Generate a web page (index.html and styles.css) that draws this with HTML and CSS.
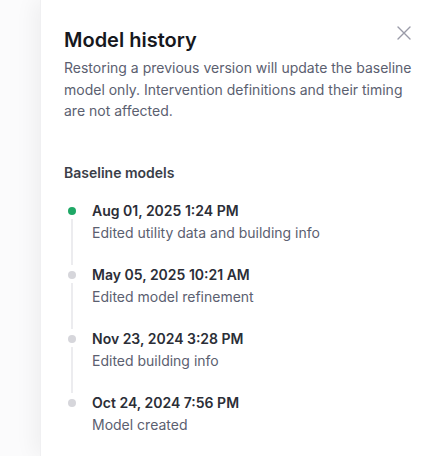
FILE: index.html
```html
<!DOCTYPE html>
<html lang="en">

<head>
    <meta charset="UTF-8">
    <meta name="viewport" content="width=device-width, initial-scale=1.0">
    <title>Model history</title>
    <link rel="stylesheet" href="styles.css">
</head>

<body>
    <aside class="panel">
        <button class="close-btn" aria-label="Close">
            <svg width="14" height="14" viewBox="0 0 14 14" fill="none">
                <path d="M1 1L13 13M13 1L1 13" stroke="currentColor" stroke-width="1.4" stroke-linecap="round" />
            </svg>
        </button>
        <h2>Model history</h2>
        <p class="intro">Restoring a previous version will update the baseline model only. Intervention definitions and their timing are not affected.</p>

        <h3 class="section-title">Baseline models</h3>
        <ul class="timeline">
            <li class="timeline-item current">
                <div class="marker"><span class="dot"></span><span class="line"></span></div>
                <div class="entry">
                    <div class="entry-date">Aug 01, 2025 1:24 PM</div>
                    <div class="entry-note">Edited utility data and building info</div>
                </div>
            </li>
            <li class="timeline-item">
                <div class="marker"><span class="dot"></span><span class="line"></span></div>
                <div class="entry">
                    <div class="entry-date">May 05, 2025 10:21 AM</div>
                    <div class="entry-note">Edited model refinement</div>
                </div>
            </li>
            <li class="timeline-item">
                <div class="marker"><span class="dot"></span><span class="line"></span></div>
                <div class="entry">
                    <div class="entry-date">Nov 23, 2024 3:28 PM</div>
                    <div class="entry-note">Edited building info</div>
                </div>
            </li>
            <li class="timeline-item">
                <div class="marker"><span class="dot"></span></div>
                <div class="entry">
                    <div class="entry-date">Oct 24, 2024 7:56 PM</div>
                    <div class="entry-note">Model created</div>
                </div>
            </li>
        </ul>
    </aside>
</body>

</html>
```

FILE: styles.css
```css
body {
    font-family: "Inter", sans-serif;
    margin: 0;
    padding: 0;
    background-color: #fbfbfc;
    height: 456px;
    overflow: hidden;
}

.panel {
    position: relative;
    margin-left: 40px;
    height: 100%;
    box-sizing: border-box;
    padding: 26px 24px 0 23px;
    background: #ffffff;
    box-shadow: -6px 0 20px rgba(0, 0, 0, 0.05);
    border-left: 1px solid #f0f0f2;
}

.close-btn {
    position: absolute;
    top: 26px;
    right: 29px;
    padding: 0;
    border: none;
    background: none;
    color: #9a9ba8;
    cursor: pointer;
    display: flex;
}

h2 {
    margin: 0;
    font-size: 20px;
    line-height: 28px;
    font-weight: 600;
    color: #16181d;
}

.intro {
    margin: 3px 0 0;
    font-size: 14px;
    line-height: 21.5px;
    color: #5b6070;
}

.section-title {
    margin: 41px 0 18px;
    font-size: 14px;
    line-height: 20px;
    font-weight: 600;
    color: #3a3e48;
}

.timeline {
    list-style: none;
    margin: 0;
    padding: 0;
}

.timeline-item {
    display: flex;
    gap: 12px;
}

.marker {
    width: 16px;
    display: flex;
    flex-direction: column;
    align-items: center;
    padding-top: 6px;
}

.dot {
    width: 8px;
    height: 8px;
    border-radius: 50%;
    background: #d6d6db;
    flex-shrink: 0;
}

.current .dot {
    background: #1fa866;
}

.line {
    flex: 1;
    width: 2px;
    margin-top: 4px;
    background: #ececef;
}

.entry {
    padding-bottom: 22px;
}

.entry-date {
    font-size: 14px;
    line-height: 20px;
    font-weight: 600;
    color: #2b2e37;
}

.entry-note {
    margin-top: 2px;
    font-size: 14px;
    line-height: 20px;
    color: #5b6070;
}
```
